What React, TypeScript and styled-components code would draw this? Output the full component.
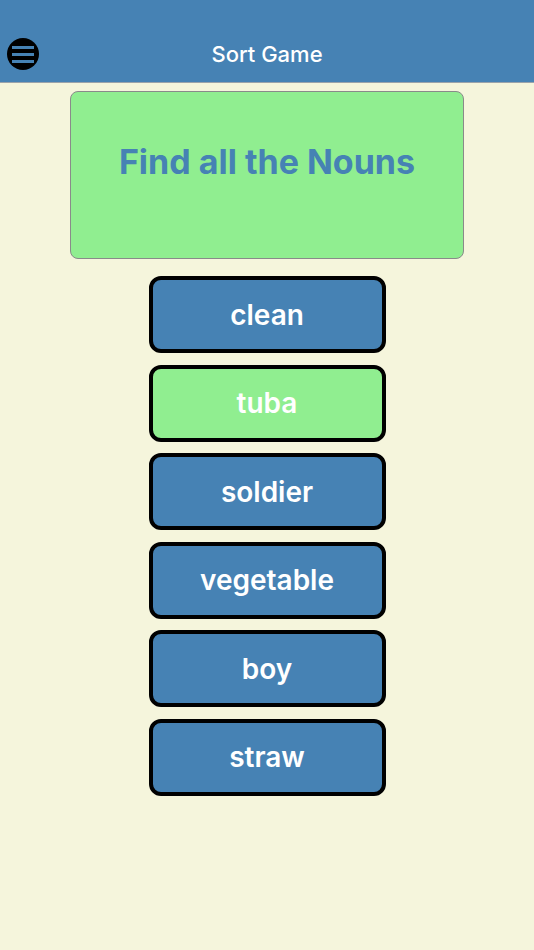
import React from "react";
import styled, { createGlobalStyle } from "styled-components";

const Global = createGlobalStyle`
  html, body { margin: 0; padding: 0; background: #f5f5dc; }
  body { font-family: Inter, "Noto Sans", sans-serif; }
`;

const Page = styled.div`
  min-height: 950px;
  background: #f5f5dc;
  display: flex;
  flex-direction: column;
`;

const Header = styled.header`
  height: 83px;
  box-sizing: border-box;
  background: #4682b4;
  border-bottom: 1px solid #9aa3ab;
  display: flex;
  align-items: center;
  padding: 26px 6px 0 7px;
`;

const MenuButton = styled.button`
  width: 32px;
  height: 32px;
  border-radius: 50%;
  background: #000;
  border: none;
  padding: 0;
  display: flex;
  flex-direction: column;
  justify-content: center;
  align-items: center;
  gap: 4px;
  cursor: pointer;
  flex: none;
`;

const MenuLine = styled.span`
  display: block;
  width: 22px;
  height: 3px;
  background: #4682b4;
`;

const Title = styled.h1`
  flex: 1;
  margin: 0 33px 0 0;
  text-align: center;
  color: #fff;
  font-size: 22px;
  font-weight: 500;
`;

const Main = styled.main`
  display: flex;
  flex-direction: column;
  align-items: center;
  padding-top: 8px;
`;

const PromptCard = styled.div`
  width: 394px;
  height: 168px;
  box-sizing: border-box;
  background: #90ee90;
  border: 1px solid #8a8a8a;
  border-radius: 8px;
  padding-top: 48px;
  text-align: center;
`;

const Prompt = styled.h2`
  margin: 0;
  color: #4682b4;
  font-size: 34px;
  font-weight: 700;
  line-height: 44px;
`;

const WordList = styled.div`
  display: flex;
  flex-direction: column;
  gap: 11.6px;
  margin-top: 17px;
`;

const WordButton = styled.button<{ $selected?: boolean }>`
  width: 237px;
  height: 77px;
  box-sizing: border-box;
  border: 4px solid #000;
  border-radius: 12px;
  background: ${(p) => (p.$selected ? "#90ee90" : "#4682b4")};
  color: #fff;
  font-family: Inter, "Noto Sans", sans-serif;
  font-size: 28px;
  font-weight: 600;
  cursor: pointer;
`;

const words = ["clean", "tuba", "soldier", "vegetable", "boy", "straw"];

export default function App() {
  return (
    <Page>
      <Global />
      <Header>
        <MenuButton aria-label="menu">
          <MenuLine />
          <MenuLine />
          <MenuLine />
        </MenuButton>
        <Title>Sort Game</Title>
      </Header>
      <Main>
        <PromptCard>
          <Prompt>Find all the Nouns</Prompt>
        </PromptCard>
        <WordList>
          {words.map((w) => (
            <WordButton key={w} $selected={w === "tuba"}>
              {w}
            </WordButton>
          ))}
        </WordList>
      </Main>
    </Page>
  );
}
